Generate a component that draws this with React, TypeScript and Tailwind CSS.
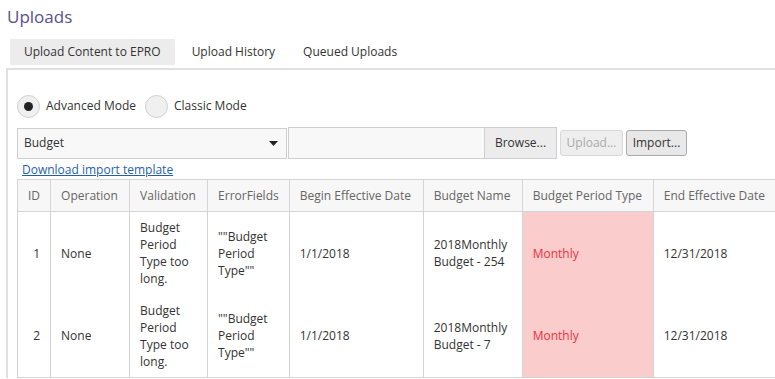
import React from "react";

const cols = [
  { w: 33, label: "ID" },
  { w: 79, label: "Operation" },
  { w: 78, label: "Validation" },
  { w: 81, label: "ErrorFields" },
  { w: 134, label: "Begin Effective Date" },
  { w: 99, label: "Budget Name" },
  { w: 131, label: "Budget Period Type" },
  { w: 140, label: "End Effective Date" },
];

const rows = [
  { id: "1", name: ["2018Monthly", "Budget - 254"] },
  { id: "2", name: ["2018Monthly", "Budget - 7"] },
];

export default function App() {
  const td = "border-x border-[#d4d4d4] px-[10px]";
  return (
    <div
      className="w-[775px] h-[379px] overflow-hidden bg-white text-[#333] text-[12px]"
      style={{ fontFamily: '"Open Sans", "Noto Sans", sans-serif' }}
    >
      <div className="pl-[7px] pt-[5px] h-[39px] text-[17px] text-[#5a4f8e] leading-[24px]">Uploads</div>
      <div className="flex h-[26px] pl-[10px]">
        <div className="px-[14px] bg-[#ececec] flex items-center text-[12px]">Upload Content to EPRO</div>
        <div className="pl-[17px] pr-[14px] flex items-center">Upload History</div>
        <div className="px-[14px] flex items-center">Queued Uploads</div>
      </div>
      <div className="ml-[6px] mt-[3px] border-t-2 border-l-2 border-[#e0e0e0] w-[800px] pl-[9px] pt-[25px]">
        <div className="flex items-center h-[22px]">
          <div className="w-[23px] h-[23px] rounded-full bg-[#f0f0f0] border border-[#d0d0d0] flex items-center justify-center">
            <div className="w-[9px] h-[9px] rounded-full bg-[#222]" />
          </div>
          <span className="ml-[6px]">Advanced Mode</span>
          <div className="w-[23px] h-[23px] rounded-full bg-[#f0f0f0] border border-[#d0d0d0] ml-[9px]" />
          <span className="ml-[6px]">Classic Mode</span>
        </div>
        <div className="flex items-center mt-[10px] h-[32px]">
          <div className="w-[270px] h-[31px] border border-[#cfcfcf] bg-[#f8f8f8] flex items-center justify-between pl-[6px] pr-[8px]">
            <span>Budget</span>
            <svg width="9" height="5" viewBox="0 0 9 5"><path d="M0 0h9L4.5 5z" fill="#222" /></svg>
          </div>
          <div className="ml-[1px] w-[197px] h-[32px] border border-[#cfcfcf] bg-[#f8f8f8]" />
          <div className="w-[72px] h-[32px] border border-[#cfcfcf] border-l-0 bg-[#ececec] flex items-center justify-center">Browse...</div>
          <div className="ml-[3px] w-[63px] h-[26px] rounded-[3px] border border-[#d8d8d8] bg-[#eeeeee] text-[#aaa] flex items-center justify-center">Upload...</div>
          <div className="ml-[3px] w-[61px] h-[26px] rounded-[3px] border border-[#aaa] bg-[#e8e8e8] flex items-center justify-center">Import...</div>
        </div>
        <div className="mt-[2px] pl-[5px] h-[18px] leading-[18px] text-[#1f5fae] underline">Download import template</div>
        <table className="table-fixed border-collapse">
          <colgroup>
            {cols.map((c, i) => (
              <col key={i} style={{ width: c.w }} />
            ))}
          </colgroup>
          <thead>
            <tr className="h-[32px] bg-[#f7f7f7] text-[#666]">
              {cols.map((c, i) => (
                <th key={i} className="border border-[#d4d4d4] font-normal text-left px-[10px] whitespace-nowrap">
                  {c.label}
                </th>
              ))}
            </tr>
          </thead>
          <tbody>
            {rows.map((r, ri) => (
              <tr key={r.id} className={"h-[83px] leading-[17px] " + (ri === rows.length - 1 ? "border-b border-[#d4d4d4]" : "")}>
                <td className="border-x border-[#d4d4d4] text-right pr-[10px]">{r.id}</td>
                <td className={td}>None</td>
                <td className={td}>
                  Budget<br />Period<br />Type too<br />long.
                </td>
                <td className={td}>
                  ""Budget<br />Period<br />Type""
                </td>
                <td className={td}>1/1/2018</td>
                <td className={td}>
                  {r.name[0]}<br />{r.name[1]}
                </td>
                <td className={td + " bg-[#fbcccc] text-[#f0303c]"}>Monthly</td>
                <td className={td}>12/31/2018</td>
              </tr>
            ))}
          </tbody>
        </table>
      </div>
    </div>
  );
}
